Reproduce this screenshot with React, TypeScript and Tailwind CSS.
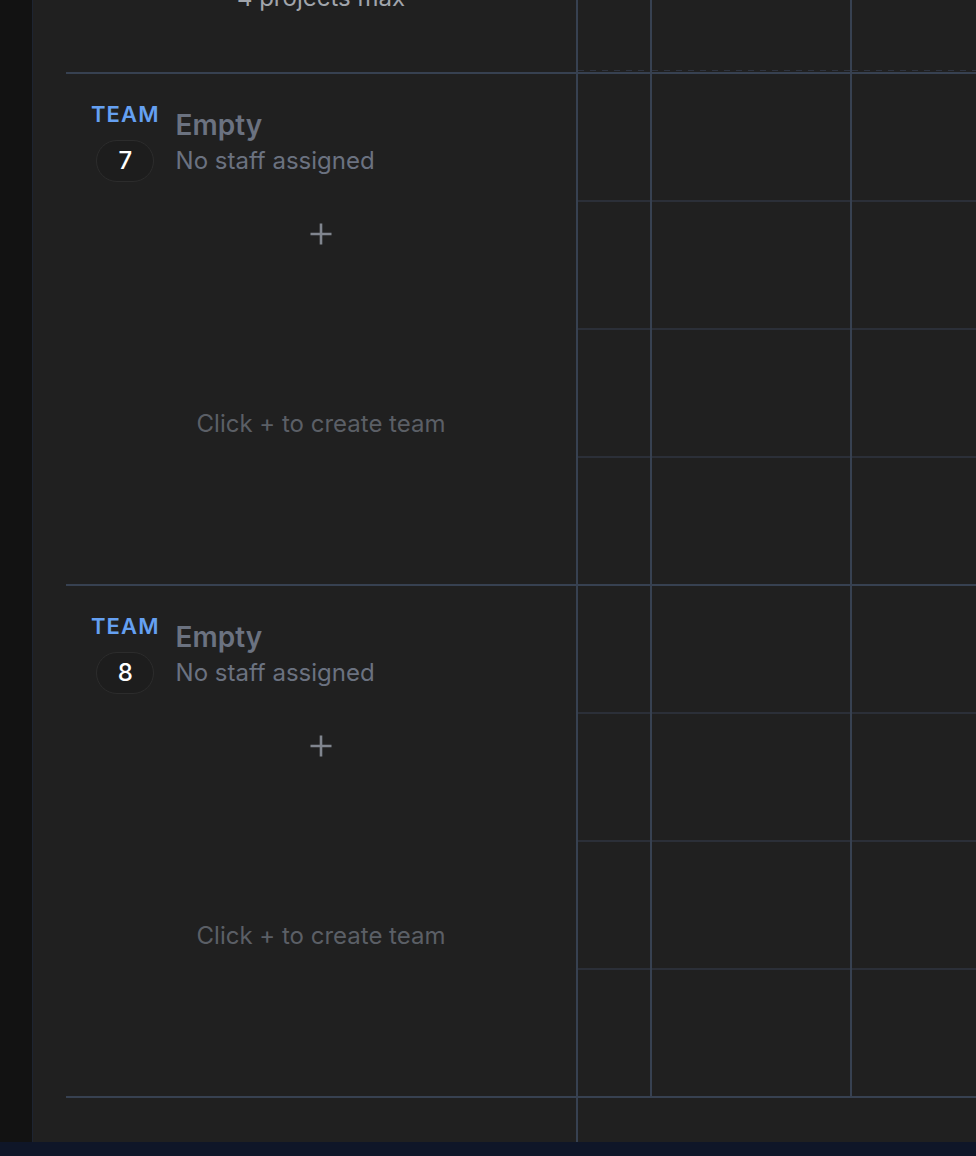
import React from "react";

const LINE = "border-[#374151]";

function GridCols({ sub, dashed }: { sub: boolean; dashed?: boolean }) {
  const cols = ["w-[74px]", "w-[200px]", "flex-1"];
  return (
    <>
      {cols.map((c, i) => (
        <div key={i} className={`${c} border-l-2 ${LINE} flex flex-col`}>
          {sub ? (
            [0, 1, 2, 3].map((r) => (
              <div
                key={r}
                className={`h-[126px] ${r > 0 ? "border-t-2 border-[#2b2f38] h-[128px]" : ""}`}
              />
            ))
          ) : (
            <div className="flex-1 flex flex-col justify-end">
              {dashed ? (
                <div className="h-px mb-[1px] bg-[repeating-linear-gradient(90deg,#2f3440_0px,#2f3440_6px,transparent_6px,transparent_12px)]" />
              ) : null}
            </div>
          )}
        </div>
      ))}
    </>
  );
}

function TeamBlock({ n }: { n: number }) {
  return (
    <div className={`flex h-[512px] border-b-2 ${LINE}`}>
      <div className="w-[510px] flex flex-col">
        <div className="flex pt-[26px] pl-[25px] gap-[16px]">
          <div className="flex flex-col items-center">
            <div className="text-[22px] leading-[28px] font-semibold tracking-[0.05em] text-[#65a0f2]">
              TEAM
            </div>
            <div className="mt-[12px] w-[58px] h-[42px] rounded-full border border-[#2c2c2c] bg-[#1d1d1d] flex items-center justify-center text-[24px] leading-[40px] font-medium text-white">
              {n}
            </div>
          </div>
          <div className="flex flex-col mt-[9px]">
            <div className="text-[28px] leading-[32px] font-semibold text-[#6b7280]">Empty</div>
            <div className="mt-[5px] text-[24px] leading-[30px] text-[#6b7280]">No staff assigned</div>
          </div>
        </div>
        <div className="mt-[40px] flex justify-center">
          <svg width="24" height="24" viewBox="0 0 24 24" fill="none" stroke="#80858e" strokeWidth="2.6" strokeLinecap="butt">
            <path d="M12 1.5v21M1.5 12h21" />
          </svg>
        </div>
        <div className="mt-[163px] text-center text-[24px] leading-[30px] text-[#5b5f66]">
          Click + to create team
        </div>
      </div>
      <GridCols sub />
    </div>
  );
}

export default function App() {
  return (
    <div className="w-full h-[1156px] flex flex-col bg-[#0f1628] overflow-hidden font-['Inter',sans-serif]">
      <div className="flex h-[1142px]">
        <div className="w-[33px] bg-[#121212] border-r border-[#1d2431] shrink-0" />
        <div className="flex-1 bg-[#202020] pl-[33px] flex flex-col overflow-hidden">
          <div className={`flex h-[74px] border-b-2 ${LINE} shrink-0`}>
            <div className="w-[510px] overflow-hidden">
              <div className="mt-[-17px] text-center text-[24px] leading-[30px] text-[#a1a5ac]">4 projects max</div>
            </div>
            <GridCols sub={false} dashed />
          </div>
          <TeamBlock n={7} />
          <TeamBlock n={8} />
          <div className="flex flex-1">
            <div className="w-[510px]" />
            <div className={`flex-1 border-l-2 ${LINE}`} />
          </div>
        </div>
      </div>
    </div>
  );
}
